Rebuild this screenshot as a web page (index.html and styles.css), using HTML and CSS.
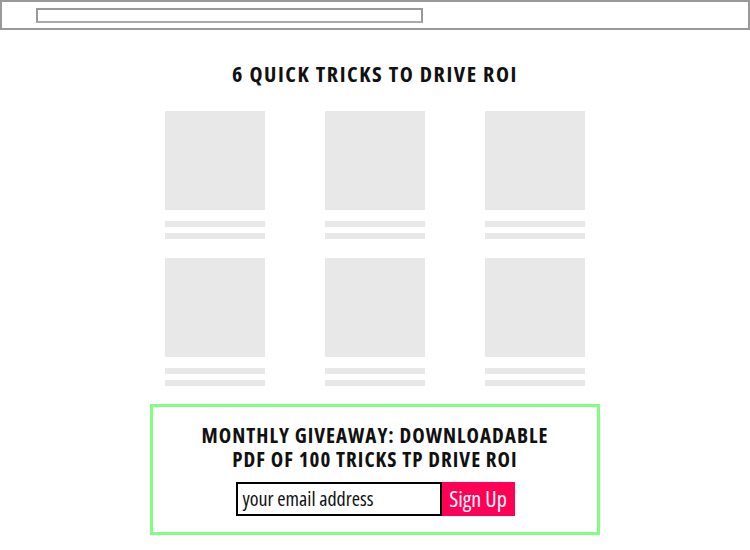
FILE: index.html
```html
<!DOCTYPE html>
<html>
<head>
<meta charset="utf-8">
<link rel="stylesheet" href="styles.css">
</head>
<body>
<header class="topbar">
  <div class="urlbar"></div>
</header>
<main class="page">
  <h1 class="title">6 QUICK TRICKS TO DRIVE ROI</h1>
  <div class="grid">
    <div class="card"><div class="thumb"></div><div class="line"></div><div class="line"></div></div>
    <div class="card"><div class="thumb"></div><div class="line"></div><div class="line"></div></div>
    <div class="card"><div class="thumb"></div><div class="line"></div><div class="line"></div></div>
    <div class="card"><div class="thumb"></div><div class="line"></div><div class="line"></div></div>
    <div class="card"><div class="thumb"></div><div class="line"></div><div class="line"></div></div>
    <div class="card"><div class="thumb"></div><div class="line"></div><div class="line"></div></div>
  </div>
  <section class="promo">
    <h2 class="promo-title"><span class="pl">MONTHLY GIVEAWAY: DOWNLOADABLE</span><span class="pl">PDF OF 100 TRICKS TP DRIVE ROI</span></h2>
    <form class="signup">
      <div class="email">your email address</div>
      <div class="btn">Sign Up</div>
    </form>
  </section>
</main>
</body>
</html>
```

FILE: styles.css
```css
* { box-sizing: border-box; }
html, body { margin: 0; padding: 0; background: #fff; }
body {
  width: 750px;
  height: 550px;
  overflow: hidden;
  font-family: "Open Sans", sans-serif;
  font-stretch: 75%;
}
.topbar {
  height: 30px;
  border: 2px solid #999;
  padding: 6px 0 0 34px;
}
.urlbar {
  width: 387px;
  height: 15px;
  border: 2px solid #999;
  border-bottom-color: #aaa;
  background: #fff;
}
.page {
  display: flex;
  flex-direction: column;
  align-items: center;
}
.title {
  margin: 31px 0 0;
  height: 27px;
  font-size: 22px;
  line-height: 24px;
  font-weight: bold;
  color: #111;
  letter-spacing: 1.55px;
}
.grid {
  margin-top: 23px;
  display: grid;
  grid-template-columns: repeat(3, 100px);
  column-gap: 60px;
  row-gap: 19px;
}
.card { display: flex; flex-direction: column; }
.thumb { height: 99px; background: #e8e8e8; }
.line { height: 6px; background: #e8e8e8; margin-top: 6px; }
.thumb + .line { margin-top: 11px; }
.promo {
  margin-top: 18px;
  width: 450px;
  height: 131px;
  border: 3px solid #80ff80;
  display: flex;
  flex-direction: column;
  align-items: center;
}
.promo-title {
  margin: 16px 0 0;
  display: flex;
  flex-direction: column;
  align-items: center;
  font-size: 21px;
  font-weight: bold;
  color: #111;
  letter-spacing: 1px;
}
.pl { display: block; line-height: 24px; height: 24px; }
.signup {
  margin-top: 11px;
  display: flex;
}
.email {
  width: 206px;
  height: 34px;
  border: 2px solid #000;
  padding: 0 0 0 5px;
  font-size: 20px;
  font-weight: 500;
  line-height: 30px;
  color: #111;
}
.btn {
  width: 73px;
  height: 34px;
  background: #ff0055;
  color: #fff;
  font-size: 22px;
  font-weight: 500;
  line-height: 33px;
  text-align: center;
}
```
